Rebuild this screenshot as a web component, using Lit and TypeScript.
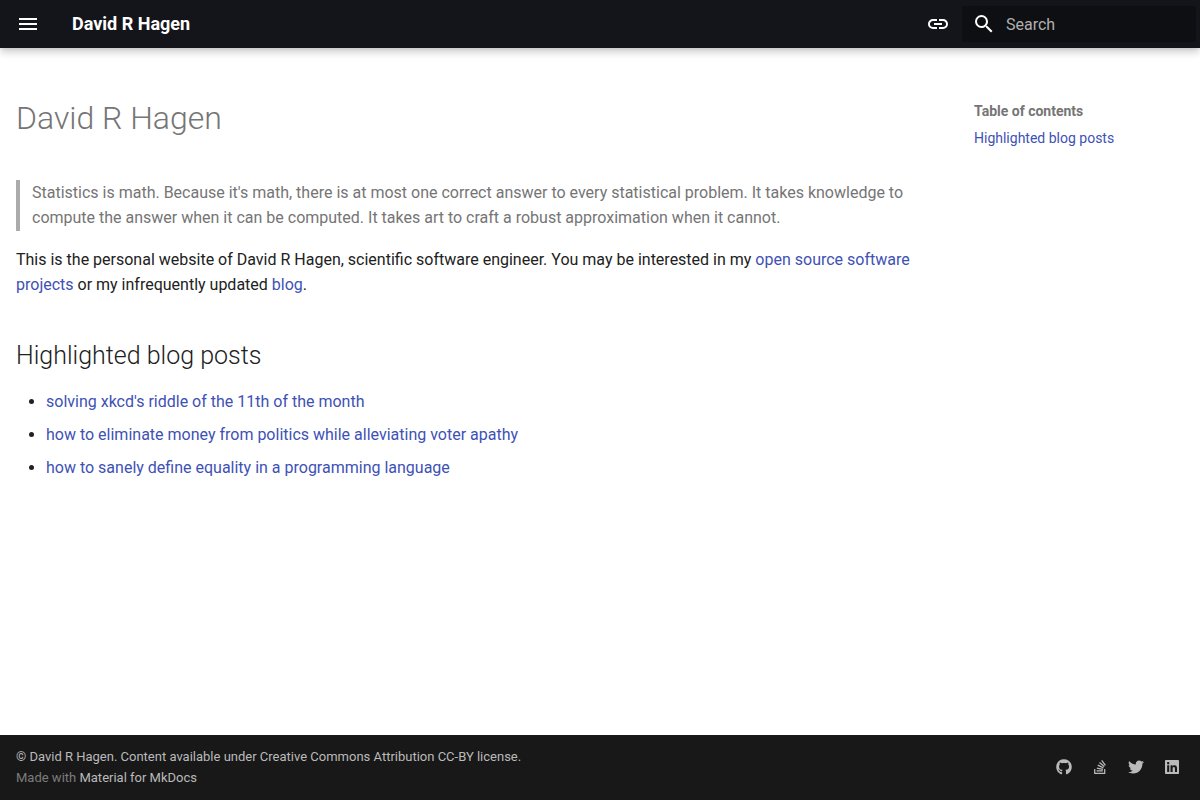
import { LitElement, html, css, svg } from "lit";
import { customElement } from "lit/decorators.js";

const posts = [
  "solving xkcd's riddle of the 11th of the month",
  "how to eliminate money from politics while alleviating voter apathy",
  "how to sanely define equality in a programming language",
];

const socials = [
  {
    label: "GitHub",
    box: "0 0 496 512",
    shape: "M165.9 397.4c0 2-2.3 3.6-5.2 3.6-3.3.3-5.6-1.3-5.6-3.6 0-2 2.3-3.6 5.2-3.6 3-.3 5.6 1.3 5.6 3.6zM244.8 8C106.1 8 0 113.3 0 252c0 110.9 69.8 205.8 169.5 239.2 12.8 2.3 17.3-5.6 17.3-12.1 0-6.2-.3-40.4-.3-61.4 0 0-70 15-84.7-29.8 0 0-11.4-29.1-27.8-36.6 0 0-22.9-15.7 1.6-15.4 0 0 24.9 2 38.6 25.8 21.9 38.6 58.6 27.5 72.9 20.9 2.3-16 8.8-27.1 16-33.7-55.9-6.2-112.3-14.3-112.3-110.5 0-27.5 7.6-41.3 23.6-58.9-2.6-6.5-11.1-33.3 2.6-67.9 20.9-6.5 69 27 69 27 20-5.6 41.5-8.5 62.8-8.5s42.8 2.9 62.8 8.5c0 0 48.1-33.6 69-27 13.7 34.7 5.2 61.4 2.6 67.9 16 17.7 25.8 31.5 25.8 58.9 0 96.5-58.9 104.2-114.8 110.5 9.2 7.9 17 22.9 17 46.4 0 33.7-.3 75.4-.3 83.6 0 6.5 4.6 14.4 17.3 12.1C428.2 457.8 496 362.9 496 252 496 113.3 383.5 8 244.8 8z",
  },
  {
    label: "Stack Overflow",
    box: "0 0 384 512",
    shape: "M290.7 311 95 269.7 86.8 309l195.7 41zm51-87L188.2 95.7l-25.5 30.8 153.5 128.3zm-31.2 39.7L129.2 179l-16.7 36.5L293.7 300zM262 32l-32 24 119.3 160.3 32-24zm20.5 328h-200v39.7h200zm39.7 80H42.7V320h-40v160h359.5V320h-40z",
  },
  {
    label: "Twitter",
    box: "0 0 512 512",
    shape: "M459.37 151.716c.325 4.548.325 9.097.325 13.645 0 138.72-105.583 298.558-298.558 298.558-59.452 0-114.68-17.219-161.137-47.106 8.447.974 16.568 1.299 25.34 1.299 49.055 0 94.213-16.568 130.274-44.832-46.132-.975-84.792-31.188-98.112-72.772 6.498.974 12.995 1.624 19.818 1.624 9.421 0 18.843-1.3 27.614-3.573-48.081-9.747-84.143-51.98-84.143-102.985v-1.299c13.969 7.797 30.214 12.67 47.431 13.319-28.264-18.843-46.781-51.005-46.781-87.391 0-19.492 5.197-37.36 14.294-52.954 51.655 63.675 129.3 105.258 216.365 109.807-1.624-7.797-2.599-15.918-2.599-24.04 0-57.828 46.782-104.934 104.934-104.934 30.213 0 57.502 12.67 76.67 33.137 23.715-4.548 46.456-13.32 66.599-25.34-7.798 24.366-24.366 44.833-46.132 57.827 21.117-2.273 41.584-8.122 60.426-16.243-14.292 20.791-32.161 39.308-52.628 54.253z",
  },
  {
    label: "LinkedIn",
    box: "0 0 448 512",
    shape: "M416 32H31.9C14.3 32 0 46.5 0 64.3v383.4C0 465.5 14.3 480 31.9 480H416c17.6 0 32-14.5 32-32.3V64.3c0-17.8-14.4-32.3-32-32.3zM135.4 416H69V202.2h66.5V416zm-33.2-243c-21.3 0-38.5-17.3-38.5-38.5S80.9 96 102.2 96c21.2 0 38.5 17.3 38.5 38.5 0 21.3-17.2 38.5-38.5 38.5zm282.1 243h-66.4V312c0-24.8-.5-56.7-34.5-56.7-34.6 0-39.9 27-39.9 54.9V416h-66.4V202.2h63.7v29.2h.9c8.9-16.8 30.6-34.5 62.9-34.5 67.2 0 79.7 44.3 79.7 101.9V416z",
  },
];

const icon = (box: string, shape: string) => html`
  <svg class="icon" viewBox=${box} aria-hidden="true">${svg`<path d=${shape}></path>`}</svg>
`;

@customElement("app-root")
export class AppRoot extends LitElement {
  static styles = css`
    :host {
      display: flex;
      flex-direction: column;
      min-height: 100vh;
      background: #fff;
      color: #212121;
      font-family: Roboto, "Liberation Sans", sans-serif;
      font-size: 16px;
      line-height: 25px;
    }
    * { box-sizing: border-box; }
    a { color: #4051b5; text-decoration: none; }
    .icon { display: block; width: 24px; height: 24px; fill: currentColor; }

    .header {
      display: flex;
      align-items: center;
      height: 48px;
      padding: 0 4px;
      background: #14151a;
      color: #fff;
      box-shadow: 0 0 4px rgba(0, 0, 0, 0.1), 0 4px 8px rgba(0, 0, 0, 0.2);
    }
    .tool {
      display: block;
      padding: 12px;
      border: 0;
      background: none;
      color: inherit;
    }
    .site {
      flex: 1;
      margin-left: 20px;
      color: inherit;
      font-size: 18px;
      font-weight: 700;
      line-height: 24px;
    }
    .search {
      display: flex;
      align-items: center;
      gap: 10px;
      width: 234px;
      height: 36px;
      padding: 0 10px;
      border-radius: 2px;
      background: #0e0f13;
    }
    .field {
      flex: 1;
      min-width: 0;
      padding: 0;
      border: 0;
      outline: 0;
      background: none;
      color: #fff;
      font: inherit;
    }
    .field::placeholder { color: #b0b0b2; opacity: 1; }

    .main {
      display: grid;
      grid-template-columns: minmax(0, 1fr) 242px;
      flex: 1;
    }
    .article { padding: 50px 40px 24px 16px; }
    h1 {
      margin: 0 0 42px;
      color: #757575;
      font-size: 32px;
      font-weight: 300;
      line-height: 40px;
    }
    h2 {
      margin: 41px 0 16px;
      font-size: 25px;
      font-weight: 300;
      line-height: 35px;
    }
    blockquote {
      margin: 0 0 16px;
      padding: 0 0 1px 12px;
      border-left: 4px solid #ababab;
      color: #757575;
    }
    p { margin: 0; }
    .posts {
      display: grid;
      gap: 8px;
      margin: 0;
      padding-left: 30px;
    }
    .toc {
      padding: 54px 16px 0;
      font-size: 14px;
      line-height: 18px;
    }
    .toc-title {
      margin: 0 0 9px;
      color: #757575;
      font-size: 14px;
      font-weight: 700;
      line-height: 18px;
    }

    .footer {
      display: flex;
      align-items: center;
      justify-content: space-between;
      padding: 11px 12px 12px 16px;
      background: #181818;
      color: #7c7c7c;
      font-size: 13px;
      line-height: 21px;
    }
    .copyright { color: #bababa; }
    .footer a { color: #bababa; }
    .socials { display: flex; gap: 4px; }
    .social {
      display: grid;
      place-items: center;
      width: 32px;
      height: 32px;
    }
    .social .icon { width: 16px; height: 16px; }
  `;

  render() {
    return html`
      <header class="header">
        <button class="tool" type="button" aria-label="Open navigation">
          ${icon("0 0 24 24", "M3 6h18v2H3V6m0 5h18v2H3v-2m0 5h18v2H3v-2Z")}
        </button>
        <a class="site" href="#top">David R Hagen</a>
        <a class="tool" href="#share" aria-label="Share">
          ${icon("0 0 24 24", "M3.9 12c0-1.71 1.39-3.1 3.1-3.1h4V7H7a5 5 0 0 0 0 10h4v-1.9H7c-1.71 0-3.1-1.39-3.1-3.1M8 13h8v-2H8v2m9-6h-4v1.9h4c1.71 0 3.1 1.39 3.1 3.1 0 1.71-1.39 3.1-3.1 3.1h-4V17h4a5 5 0 0 0 0-10Z")}
        </a>
        <label class="search">
          ${icon("0 0 24 24", "M9.5 3A6.5 6.5 0 0 1 16 9.5c0 1.61-.59 3.09-1.56 4.23l.27.27h.79l5 5-1.5 1.5-5-5v-.79l-.27-.27A6.516 6.516 0 0 1 9.5 16a6.5 6.5 0 0 1 0-13m0 2C7 5 5 7 5 9.5S7 14 9.5 14 14 12 14 9.5 12 5 9.5 5Z")}
          <input class="field" type="text" placeholder="Search" aria-label="Search" />
        </label>
      </header>

      <main class="main">
        <article class="article">
          <h1 id="top">David R Hagen</h1>
          <blockquote>
            Statistics is math. Because it's math, there is at most one correct answer to every
            statistical problem. It takes knowledge to compute the answer when it can be computed.
            It takes art to craft a robust approximation when it cannot.
          </blockquote>
          <p>
            This is the personal website of David R Hagen, scientific software engineer. You may be
            interested in my <a href="#projects">open source software projects</a> or my
            infrequently updated <a href="#blog">blog</a>.
          </p>
          <h2 id="highlighted">Highlighted blog posts</h2>
          <ul class="posts">
            ${posts.map((post) => html`<li><a href="#blog">${post}</a></li>`)}
          </ul>
        </article>
        <nav class="toc" aria-labelledby="toc-title">
          <h3 class="toc-title" id="toc-title">Table of contents</h3>
          <a href="#highlighted">Highlighted blog posts</a>
        </nav>
      </main>

      <footer class="footer">
        <div>
          <div class="copyright">
            © David R Hagen. Content available under Creative Commons Attribution CC-BY license.
          </div>
          Made with <a href="#material">Material for MkDocs</a>
        </div>
        <div class="socials">
          ${socials.map(
            (s) => html`<a class="social" href="#social" aria-label=${s.label}>${icon(s.box, s.shape)}</a>`
          )}
        </div>
      </footer>
    `;
  }
}
